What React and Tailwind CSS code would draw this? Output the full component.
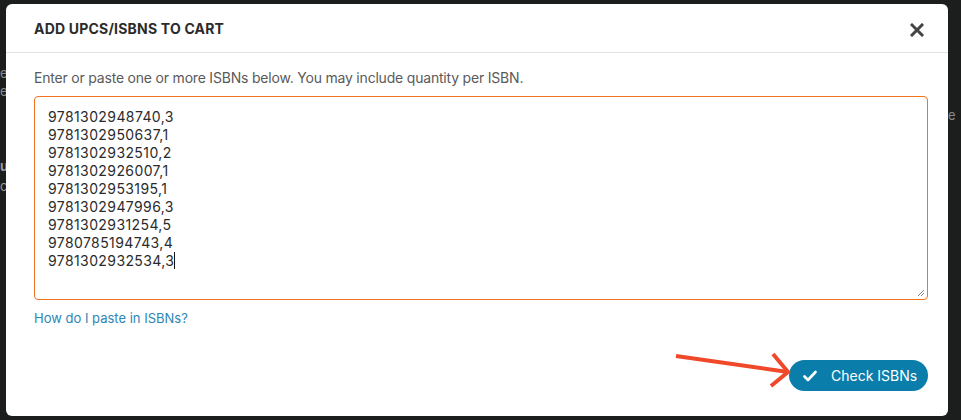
import React from "react";

const lines = [
  "9781302948740,3",
  "9781302950637,1",
  "9781302932510,2",
  "9781302926007,1",
  "9781302953195,1",
  "9781302947996,3",
  "9781302931254,5",
  "9780785194743,4",
  "9781302932534,3",
];

export default function App() {
  return (
    <div
      className="relative h-[420px] w-[961px] overflow-hidden bg-[#1c1d1d] pl-[6px] pt-[4px]"
      style={{ fontFamily: "Inter, 'Open Sans', sans-serif" }}
    >
      <div className="absolute left-0 top-[64px] text-[13px] leading-[18px] text-[#8a8a8a]">
        <div>es</div>
        <div>ep</div>
      </div>
      <div className="absolute left-0 top-[156px] text-[13px] leading-[20px] text-[#9a9a9a]">
        <div className="font-bold">u</div>
        <div>c</div>
      </div>
      <div className="absolute left-[948px] top-[106px] text-[13px] text-[#8a8a8a]">e</div>

      <div className="relative flex h-[412px] w-[942px] flex-col rounded-[6px] bg-white">
        <div className="flex h-[49px] items-center justify-between border-b border-[#e2e2e2] pl-[28px] pr-[24px]">
          <h2 className="text-[14px] font-bold tracking-[0.2px] text-[#2b2b2b]">ADD UPCS/ISBNS TO CART</h2>
          <svg width="14" height="14" viewBox="0 0 14 14" className="mt-[3px]">
            <path d="M2 2 L12 12 M12 2 L2 12" stroke="#444" strokeWidth="3" strokeLinecap="square" />
          </svg>
        </div>
        <div className="flex flex-1 flex-col pl-[28px] pr-[20px] pt-[16px]">
          <p className="text-[14px] leading-[18px] tracking-[-0.2px] text-[#5a5a5a]">
            Enter or paste one or more ISBNs below. You may include quantity per ISBN.
          </p>
          <div className="relative mt-[9px] h-[204px] rounded-[4px] border border-[#f47320] pl-[13px] pt-[11px]">
            {lines.map((l, i) => (
              <div key={i} className="h-[18px] text-[14px] leading-[18px] tracking-[0.4px] text-[#2b2b2b]">
                {l}
                {i === lines.length - 1 && <span className="inline-block h-[17px] w-[1px] align-top bg-[#111]" />}
              </div>
            ))}
            <svg className="absolute bottom-[2px] right-[2px]" width="8" height="8" viewBox="0 0 8 8">
              <path d="M7 1 L1 7 M7 4 L4 7" stroke="#888" strokeWidth="1" />
            </svg>
          </div>
          <a className="mt-[9px] text-[13px] leading-[18px] text-[#2d86b5]">How do I paste in ISBNs?</a>
          <div className="mt-auto mb-[25px] flex justify-end">
            <button className="flex h-[31px] w-[139px] items-center rounded-full bg-[#0a7dab] pl-[14px] text-[14px] text-white">
              <svg width="14" height="12" viewBox="0 0 14 12">
                <path d="M1.5 6.5 L5 10 L12.5 2" stroke="white" strokeWidth="2.6" fill="none" strokeLinecap="round" strokeLinejoin="round" />
              </svg>
              <span className="ml-[14px]">Check ISBNs</span>
            </button>
          </div>
        </div>
        <svg className="absolute left-[664px] top-[340px]" width="130" height="45" viewBox="0 0 130 45">
          <path d="M6 12 L118 28" stroke="#f0492a" strokeWidth="4" strokeLinecap="butt" />
          <path d="M103 10 L118 28 L101 42" stroke="#f0492a" strokeWidth="4" fill="none" strokeLinejoin="miter" />
        </svg>
      </div>
    </div>
  );
}
